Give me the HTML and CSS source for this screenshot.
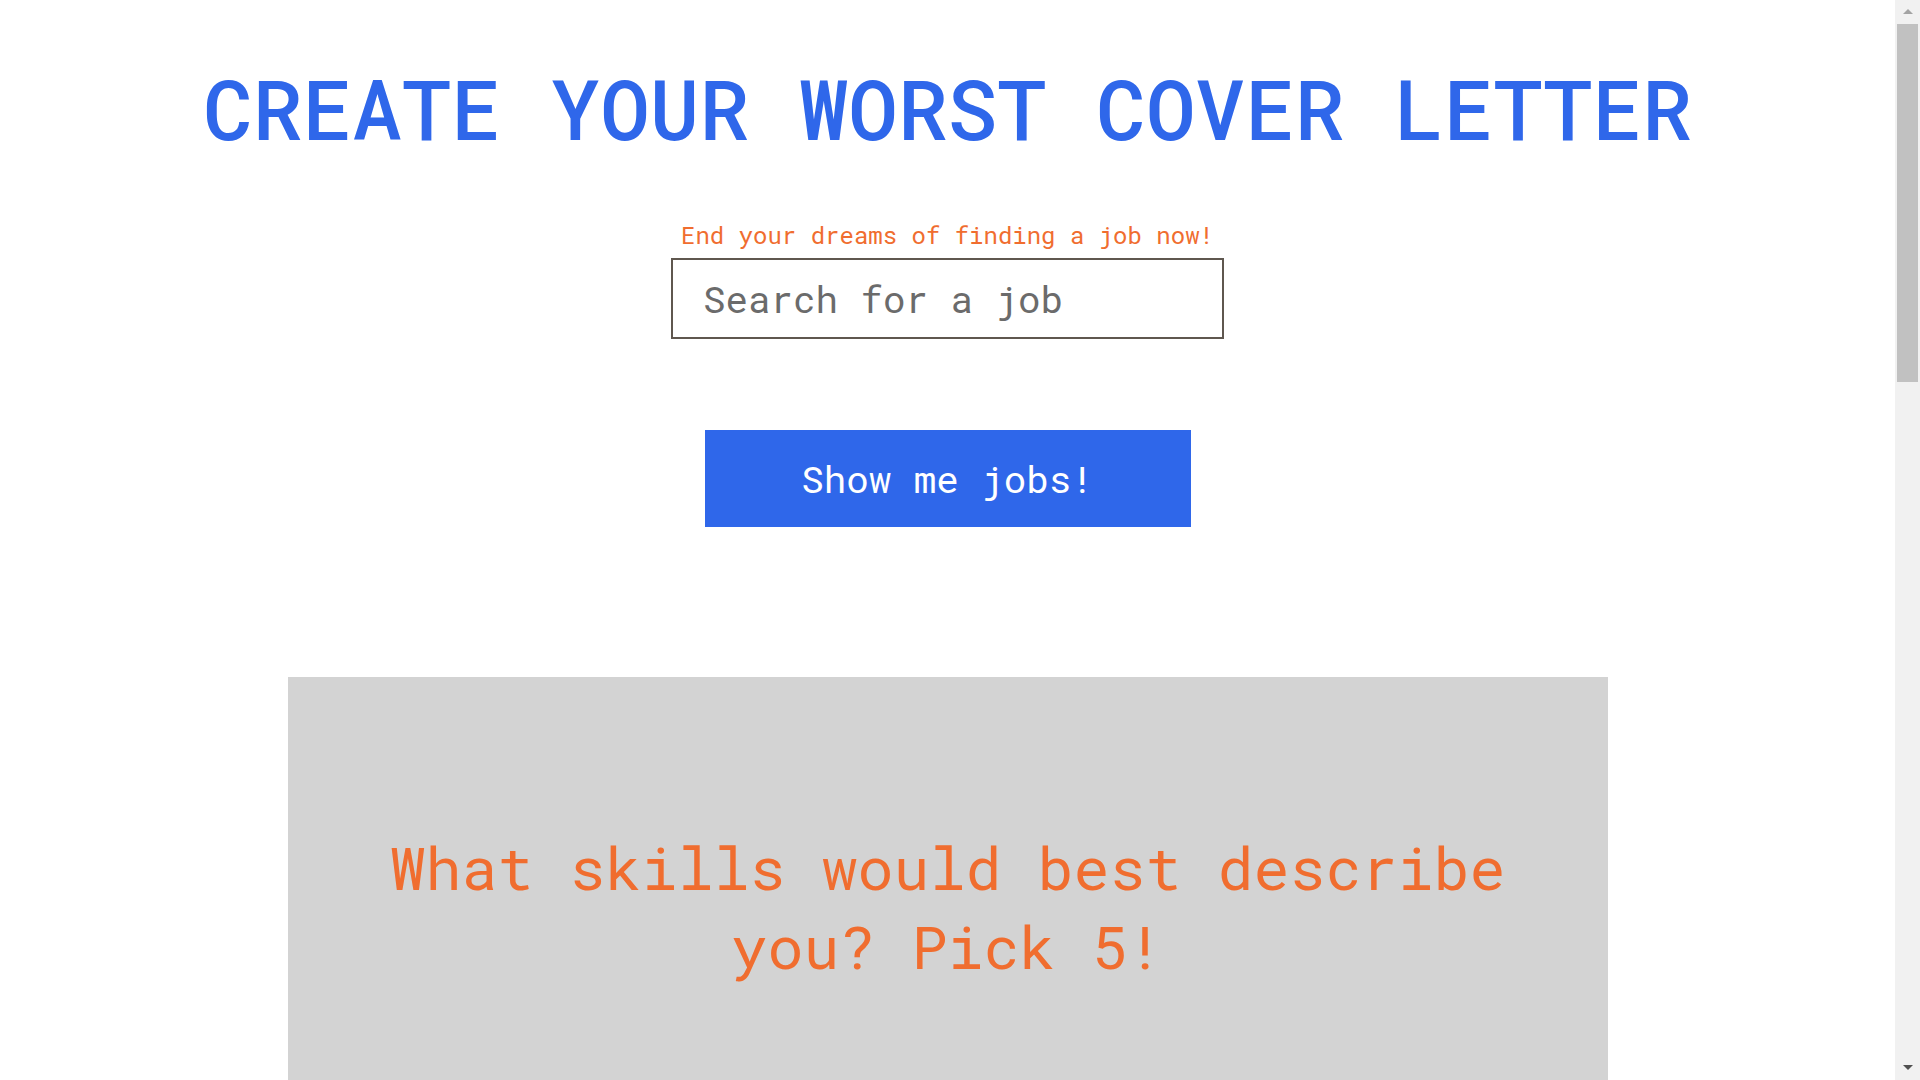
FILE: index.html
```html
<!DOCTYPE html>
<html lang="en">
<head>
<meta charset="utf-8">
<title>Create Your Worst Cover Letter</title>
<link rel="stylesheet" href="styles.css">
</head>
<body>
<main class="page">
  <h1 class="title">CREATE YOUR WORST COVER LETTER</h1>
  <label class="tagline" for="job">End your dreams of finding a job now!</label>
  <input class="search" id="job" type="text" placeholder="Search for a job">
  <button class="cta" type="button">Show me jobs!</button>
  <section class="skills">
    <h2 class="skills-title">What skills would best describe you? Pick 5!</h2>
  </section>
</main>
<div class="scrollbar" aria-hidden="true">
  <div class="sb-btn"><span class="sb-arrow sb-up"></span></div>
  <div class="sb-track"><div class="sb-thumb"></div></div>
  <div class="sb-btn"><span class="sb-arrow sb-down"></span></div>
</div>
</body>
</html>
```
FILE: styles.css
```css
html, body {
  margin: 0;
  padding: 0;
  background: #ffffff;
}

body {
  font-family: "Roboto Mono", "DejaVu Sans Mono", "Liberation Mono", monospace;
  padding-right: 25px;
}

.page {
  display: flex;
  flex-direction: column;
  align-items: center;
  padding: 58px 0 60px;
}

.title {
  margin: 0;
  font-size: 82.7px;
  line-height: 100px;
  font-weight: 500;
  color: #2f67ea;
  white-space: nowrap;
}

.tagline {
  display: block;
  margin-top: 63px;
  font-size: 24px;
  line-height: 29px;
  color: #f06d2f;
}

.search {
  box-sizing: border-box;
  margin-top: 8px;
  width: 553px;
  height: 81px;
  padding: 0 30px;
  border: 2px solid #5f574f;
  border-radius: 0;
  outline: none;
  font-family: inherit;
  font-size: 37.5px;
  color: #333;
  background: #fff;
}

.search::placeholder {
  color: #6b6b6b;
  opacity: 1;
}

.cta {
  box-sizing: border-box;
  margin-top: 91px;
  width: 486px;
  height: 97px;
  border: none;
  border-radius: 0;
  background: #2f67ea;
  color: #ffffff;
  font-family: inherit;
  font-size: 37.5px;
  cursor: pointer;
}

.skills {
  box-sizing: border-box;
  margin-top: 150px;
  width: 1320px;
  min-height: 2380px;
  padding: 150px 60px 60px;
  background: #d3d3d3;
}

.skills-title {
  margin: 0;
  font-size: 60px;
  line-height: 79px;
  font-weight: normal;
  text-align: center;
  color: #f06d2f;
}

/* window scrollbar */
.scrollbar {
  position: fixed;
  top: 0;
  right: 0;
  bottom: 0;
  width: 25px;
  display: flex;
  flex-direction: column;
  background: #f1f1f1;
}

.sb-btn {
  height: 24px;
  flex: none;
  display: flex;
  align-items: center;
  justify-content: center;
}

.sb-track {
  flex: 1;
  padding: 0 2px;
}

.sb-thumb {
  height: 358px;
  background: #c1c1c1;
}

.sb-arrow {
  width: 0;
  height: 0;
  border-left: 5.5px solid transparent;
  border-right: 5.5px solid transparent;
}

.sb-up {
  border-bottom: 5.5px solid #a3a3a3;
  margin-top: -2px;
}

.sb-down {
  border-top: 5.5px solid #505050;
  margin-top: -1px;
}
```
